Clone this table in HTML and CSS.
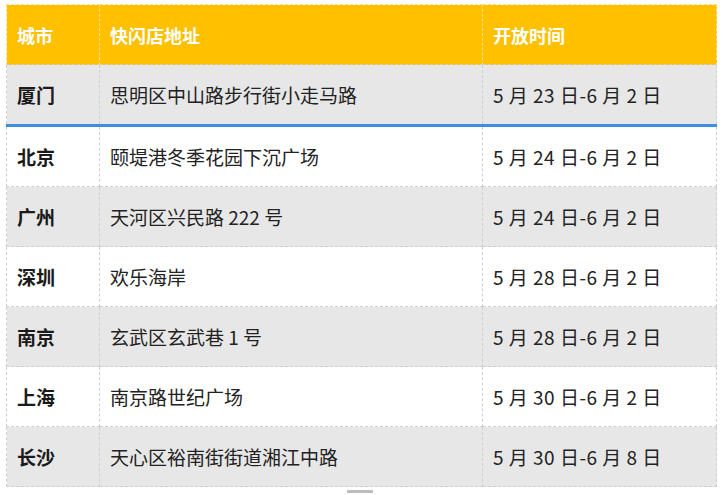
FILE: index.html
```html
<!DOCTYPE html>
<html lang="zh">
<head>
<meta charset="utf-8">
<link rel="stylesheet" href="styles.css">
</head>
<body>
<div class="wrap">
<table class="stores">
  <thead>
    <tr><th class="c1">城市</th><th class="c2">快闪店地址</th><th class="c3">开放时间</th></tr>
  </thead>
  <tbody>
    <tr class="gray first"><td class="city">厦门</td><td>思明区中山路步行街小走马路</td><td class="date">5 月 23 日-6 月 2 日</td></tr>
    <tr><td class="city">北京</td><td>颐堤港冬季花园下沉广场</td><td class="date">5 月 24 日-6 月 2 日</td></tr>
    <tr class="gray"><td class="city">广州</td><td>天河区兴民路 222 号</td><td class="date">5 月 24 日-6 月 2 日</td></tr>
    <tr><td class="city">深圳</td><td>欢乐海岸</td><td class="date">5 月 28 日-6 月 2 日</td></tr>
    <tr class="gray"><td class="city">南京</td><td>玄武区玄武巷 1 号</td><td class="date">5 月 28 日-6 月 2 日</td></tr>
    <tr><td class="city">上海</td><td>南京路世纪广场</td><td class="date">5 月 30 日-6 月 2 日</td></tr>
    <tr class="gray"><td class="city">长沙</td><td>天心区裕南街街道湘江中路</td><td class="date">5 月 30 日-6 月 8 日</td></tr>
  </tbody>
</table>
<div class="scrollmark"></div>
</div>
</body>
</html>
```
FILE: styles.css
```css
html, body {
  margin: 0;
  padding: 0;
  background: #ffffff;
}
body {
  font-family: "Noto Sans CJK SC", "Noto Sans", sans-serif;
  color: #222222;
}
.wrap {
  padding: 4px 7px 0 6px;
}
.stores {
  width: 711px;
  border-collapse: collapse;
  table-layout: fixed;
  font-size: 19px;
}
.stores th, .stores td {
  border: 1px dashed #cfcfcf;
  text-align: left;
  vertical-align: middle;
  padding: 0 0 0 10px;
  height: 59px;
  white-space: nowrap;
}
.stores th {
  background: #ffc000;
  color: #ffffff;
  font-weight: bold;
  font-size: 18px;
  border-color: #ffe08a;
  border-bottom-color: #cfcfcf;
}
.c1 { width: 82px; }
.c2 { width: 372px; }
.stores .gray td {
  background: #e7e7e7;
}
.stores .first td {
  border-bottom: 3px solid #3a8fe0;
}
.stores td.city {
  font-weight: bold;
  color: #1a1a1a;
}
.stores td.date {
  letter-spacing: 0.5px;
}
.scrollmark {
  width: 26px;
  height: 3px;
  background: #bdbdbd;
  margin: 3px 0 0 341px;
}
```
